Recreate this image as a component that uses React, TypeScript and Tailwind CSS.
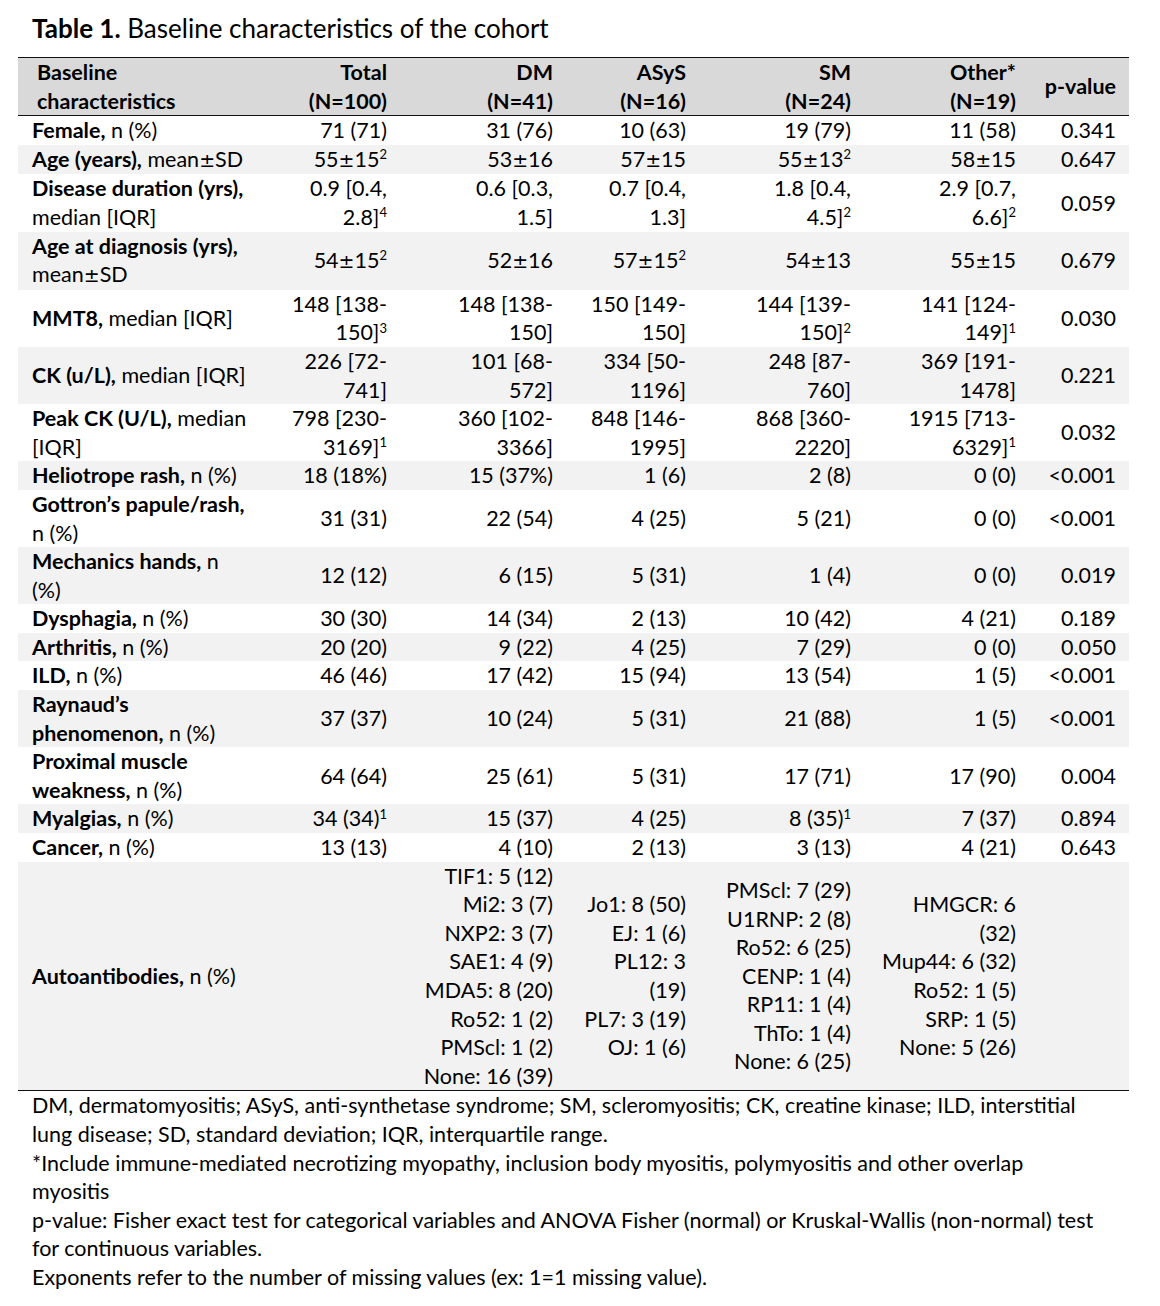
import React from "react";

type Row = { label: React.ReactNode; cells: string[]; gray: boolean };

function PM() {
  return <span style={{ fontFamily: "'DejaVu Sans', sans-serif" }} className="text-[19px]">±</span>;
}

function withPM(t: string) {
  const parts = t.split("±");
  return parts.map((p, i) => (
    <React.Fragment key={i}>
      {i > 0 && <PM />}
      {p}
    </React.Fragment>
  ));
}

function Cell({ v }: { v: string }) {
  const lines = v.split("\n");
  return (
    <>
      {lines.map((ln, i) => {
        const [t, s] = ln.split("^");
        return (
          <React.Fragment key={i}>
            {i > 0 && <br />}
            {withPM(t)}
            {s && <sup className="text-[13px] -top-[0.6em]">{s}</sup>}
          </React.Fragment>
        );
      })}
    </>
  );
}

const L = (b: React.ReactNode, n?: React.ReactNode) => (
  <>
    <b className="font-bold">{b}</b>
    {n}
  </>
);

const rows: Row[] = [
  { label: L("Female,", " n (%)"), cells: ["71 (71)", "31 (76)", "10 (63)", "19 (79)", "11 (58)", "0.341"], gray: false },
  { label: L("Age (years),", <> mean<PM />SD</>), cells: ["55±15^2", "53±16", "57±15", "55±13^2", "58±15", "0.647"], gray: true },
  { label: L("Disease duration (yrs),", <><br />median [IQR]</>), cells: ["0.9 [0.4,\n2.8]^4", "0.6 [0.3,\n1.5]", "0.7 [0.4,\n1.3]", "1.8 [0.4,\n4.5]^2", "2.9 [0.7,\n6.6]^2", "0.059"], gray: false },
  { label: L("Age at diagnosis (yrs),", <><br />mean<PM />SD</>), cells: ["54±15^2", "52±16", "57±15^2", "54±13", "55±15", "0.679"], gray: true },
  { label: L("MMT8,", " median [IQR]"), cells: ["148 [138-\n150]^3", "148 [138-\n150]", "150 [149-\n150]", "144 [139-\n150]^2", "141 [124-\n149]^1", "0.030"], gray: false },
  { label: L("CK (u/L),", " median [IQR]"), cells: ["226 [72-\n741]", "101 [68-\n572]", "334 [50-\n1196]", "248 [87-\n760]", "369 [191-\n1478]", "0.221"], gray: true },
  { label: L("Peak CK (U/L),", <> median<br />[IQR]</>), cells: ["798 [230-\n3169]^1", "360 [102-\n3366]", "848 [146-\n1995]", "868 [360-\n2220]", "1915 [713-\n6329]^1", "0.032"], gray: false },
  { label: L("Heliotrope rash,", " n (%)"), cells: ["18 (18%)", "15 (37%)", "1 (6)", "2 (8)", "0 (0)", "<0.001"], gray: true },
  { label: L("Gottron’s papule/rash,", <><br />n (%)</>), cells: ["31 (31)", "22 (54)", "4 (25)", "5 (21)", "0 (0)", "<0.001"], gray: false },
  { label: L("Mechanics hands,", <> n<br />(%)</>), cells: ["12 (12)", "6 (15)", "5 (31)", "1 (4)", "0 (0)", "0.019"], gray: true },
  { label: L("Dysphagia,", " n (%)"), cells: ["30 (30)", "14 (34)", "2 (13)", "10 (42)", "4 (21)", "0.189"], gray: false },
  { label: L("Arthritis,", " n (%)"), cells: ["20 (20)", "9 (22)", "4 (25)", "7 (29)", "0 (0)", "0.050"], gray: true },
  { label: L("ILD,", " n (%)"), cells: ["46 (46)", "17 (42)", "15 (94)", "13 (54)", "1 (5)", "<0.001"], gray: false },
  { label: L(<>Raynaud’s<br />phenomenon,</>, " n (%)"), cells: ["37 (37)", "10 (24)", "5 (31)", "21 (88)", "1 (5)", "<0.001"], gray: true },
  { label: L(<>Proximal muscle<br />weakness,</>, " n (%)"), cells: ["64 (64)", "25 (61)", "5 (31)", "17 (71)", "17 (90)", "0.004"], gray: false },
  { label: L("Myalgias,", " n (%)"), cells: ["34 (34)^1", "15 (37)", "4 (25)", "8 (35)^1", "7 (37)", "0.894"], gray: true },
  { label: L("Cancer,", " n (%)"), cells: ["13 (13)", "4 (10)", "2 (13)", "3 (13)", "4 (21)", "0.643"], gray: false },
  {
    label: L("Autoantibodies,", " n (%)"),
    cells: [
      "",
      "TIF1: 5 (12)\nMi2: 3 (7)\nNXP2: 3 (7)\nSAE1: 4 (9)\nMDA5: 8 (20)\nRo52: 1 (2)\nPMScl: 1 (2)\nNone: 16 (39)",
      "Jo1: 8 (50)\nEJ: 1 (6)\nPL12: 3\n(19)\nPL7: 3 (19)\nOJ: 1 (6)",
      "PMScl: 7 (29)\nU1RNP: 2 (8)\nRo52: 6 (25)\nCENP: 1 (4)\nRP11: 1 (4)\nThTo: 1 (4)\nNone: 6 (25)",
      "HMGCR: 6\n(32)\nMup44: 6 (32)\nRo52: 1 (5)\nSRP: 1 (5)\nNone: 5 (26)",
      "",
    ],
    gray: true,
  },
];

const headers = ["Total\n(N=100)", "DM\n(N=41)", "ASyS\n(N=16)", "SM\n(N=24)", "Other*\n(N=19)", "p-value"];

const footnotes = [
  "DM, dermatomyositis; ASyS, anti-synthetase syndrome; SM, scleromyositis; CK, creatine kinase; ILD, interstitial",
  "lung disease; SD, standard deviation; IQR, interquartile range.",
  "*Include immune-mediated necrotizing myopathy, inclusion body myositis, polymyositis and other overlap",
  "myositis",
  "p-value: Fisher exact test for categorical variables and ANOVA Fisher (normal) or Kruskal-Wallis (non-normal) test",
  "for continuous variables.",
  "Exponents refer to the number of missing values (ex: 1=1 missing value).",
];

export default function App() {
  return (
    <div
      className="w-[1160px] min-h-[1306px] bg-white text-black"
      style={{ fontFamily: "Lato, 'Open Sans', sans-serif" }}
    >
      <div className="pt-[13px] pl-[32px] text-[26px] leading-[30px] mb-[14px] whitespace-nowrap">
        <b className="font-bold">Table 1.</b> Baseline characteristics of the cohort
      </div>
      <div className="ml-[18px] w-[1111px]">
        <table className="table-fixed border-collapse w-[1111px] text-[21.5px] leading-[28.6px]">
          <colgroup>
            <col className="w-[232px]" />
            <col className="w-[145px]" />
            <col className="w-[166px]" />
            <col className="w-[133px]" />
            <col className="w-[165px]" />
            <col className="w-[165px]" />
            <col className="w-[105px]" />
          </colgroup>
          <thead>
            <tr className="bg-[#d9d9d9] border-t-[1.5px] border-b-[1.5px] border-[#111]">
              <th className="text-left font-bold pl-[19px] align-middle whitespace-nowrap">
                Baseline
                <br />
                characteristics
              </th>
              {headers.map((h, i) => (
                <th
                  key={i}
                  className={`text-right font-bold align-middle whitespace-nowrap ${i === 5 ? "pr-[13px]" : "pr-[8px]"}`}
                >
                  <Cell v={h} />
                </th>
              ))}
            </tr>
          </thead>
          <tbody className="border-b-[1.5px] border-[#111]">
            {rows.map((r, ri) => (
              <tr key={ri} className={r.gray ? "bg-[#f2f2f2]" : "bg-white"}>
                <td className="pl-[14px] align-middle whitespace-nowrap">{r.label}</td>
                {r.cells.map((c, ci) => (
                  <td
                    key={ci}
                    className={`text-right align-middle whitespace-nowrap ${ci === 5 ? "pr-[13px]" : "pr-[8px]"}`}
                  >
                    <Cell v={c} />
                  </td>
                ))}
              </tr>
            ))}
          </tbody>
        </table>
        <div className="pl-[14px] text-[21.5px] leading-[28.6px]">
          {footnotes.map((f, i) => (
            <div key={i} className="whitespace-nowrap">
              {f}
            </div>
          ))}
        </div>
      </div>
    </div>
  );
}
